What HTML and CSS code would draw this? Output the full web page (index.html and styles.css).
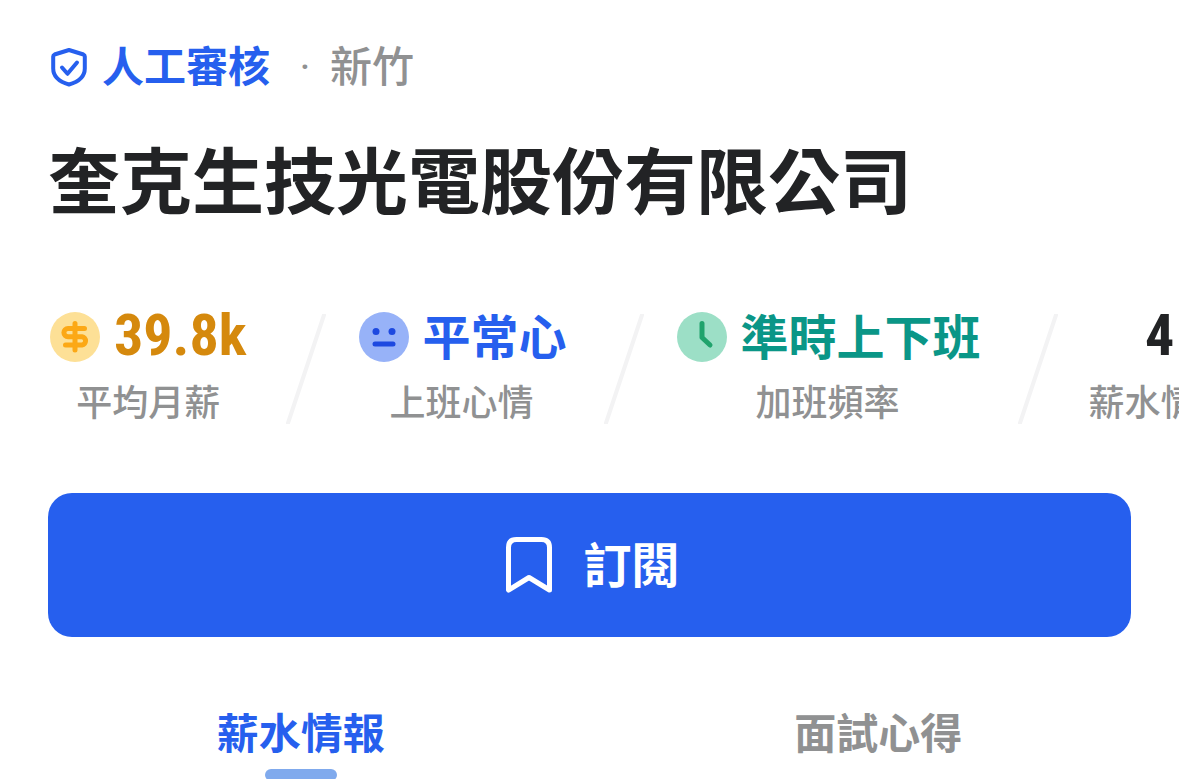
FILE: index.html
```html
<!DOCTYPE html>
<html lang="zh-Hant">
<head>
  <meta charset="UTF-8" />
  <meta name="viewport" content="width=device-width, initial-scale=1.0"/>
  <title>奎克生技光電股份有限公司</title>
  <link rel="stylesheet" href="styles.css">
</head>
<body>
  <header class="company">
    <div class="meta">
      <svg class="shield" viewBox="0 0 42 42" aria-hidden="true">
        <path d="M21 4 L35.500 8.500 Q36.800 9 36.800 10.500 V22.500 C36.800 32 28 36.500 21 38.500 C14 36.500 5.200 32 5.200 22.500 V10.500 Q5.200 9 6.500 8.500 Z"/>
        <path d="M14 21.500 L19.500 27.800 L29 16.500"/>
      </svg>
      <span class="verified">人工審核</span>
      <span class="dot">·</span>
      <span class="city">新竹</span>
    </div>
    <h1>奎克生技光電股份有限公司</h1>
  </header>

  <!-- Company stats, scrolls sideways -->
  <section class="stats">
    <div class="stat salary">
      <div class="value">
        <svg viewBox="0 0 54 54" aria-hidden="true">
          <circle class="disc" cx="27" cy="27" r="25"/>
          <path d="M36.500 18.500 H20 A4.100 4.100 0 0 0 20 26.700 H34 A4.200 4.200 0 0 1 34 35 H17.500 M27 13.500 V40"/>
        </svg>
        <span class="number">39.8k</span>
      </div>
      <div class="label">平均月薪</div>
    </div>
    <svg class="divider" viewBox="0 0 40 110" aria-hidden="true"><path d="M38 1 L2 109"/></svg>
    <div class="stat mood">
      <div class="value">
        <svg viewBox="0 0 54 54" aria-hidden="true">
          <circle class="disc" cx="27" cy="27" r="25"/>
          <circle class="eye" cx="19" cy="21.500" r="3.500"/>
          <circle class="eye" cx="35" cy="21.500" r="3.500"/>
          <path d="M18 34 H36"/>
        </svg>
        <span>平常心</span>
      </div>
      <div class="label">上班心情</div>
    </div>
    <svg class="divider" viewBox="0 0 40 110" aria-hidden="true"><path d="M38 1 L2 109"/></svg>
    <div class="stat overtime">
      <div class="value">
        <svg viewBox="0 0 54 54" aria-hidden="true">
          <circle class="disc" cx="27" cy="27" r="25"/>
          <path d="M27 13.500 V27.500 L35 35"/>
        </svg>
        <span>準時上下班</span>
      </div>
      <div class="label">加班頻率</div>
    </div>
    <svg class="divider" viewBox="0 0 40 110" aria-hidden="true"><path d="M38 1 L2 109"/></svg>
    <div class="stat">
      <div class="value"><span class="number">4</span></div>
      <div class="label">薪水情報</div>
    </div>
  </section>

  <div class="action">
    <button type="button" class="subscribe">
      <svg viewBox="0 0 72 72" aria-hidden="true">
        <path d="M15.500 61 V18.500 Q15.500 10.500 23.500 10.500 H48.500 Q56.500 10.500 56.500 18.500 V61 L36 48.500 Z"/>
      </svg>
      <span>訂閱</span>
    </button>
  </div>

  <nav class="tabs">
    <a href="#salary" class="tab active">薪水情報</a>
    <a href="#interview" class="tab">面試心得</a>
  </nav>
</body>
</html>
```
FILE: styles.css
```css
* {
  box-sizing: border-box;
  margin: 0;
  padding: 0;
}

body {
  font-family: "Noto Sans CJK TC", sans-serif;
  background-color: #fff;
  color: #222325;
  overflow-x: hidden;
}

svg {
  display: block;
  flex-shrink: 0;
  fill: none;
  stroke-linecap: round;
  stroke-linejoin: round;
}

.company {
  padding: 34px 48px 0;
}

.meta {
  display: flex;
  align-items: center;
  font-size: 42px;
  line-height: 60px;
  font-weight: 500;
  color: #909192;
}

.shield {
  width: 42px;
  height: 42px;
  margin-top: 6px;
  stroke: #265fee;
  stroke-width: 4;
}

.verified {
  margin-left: 12px;
  color: #265fee;
  font-weight: bold;
}

.dot {
  width: 60px;
  padding: 8px 0 0 10px;
  line-height: 52px;
  text-align: center;
  font-family: Roboto, sans-serif;
  font-weight: normal;
}

h1 {
  margin-top: 35px;
  font-size: 72px;
  line-height: 96px;
  font-weight: bold;
}

.stats {
  display: flex;
  padding: 79px 48px 8px;
  overflow-x: auto;
  scrollbar-width: none;
}

.stat {
  flex-shrink: 0;
  text-align: center;
}

.value {
  display: flex;
  align-items: center;
  justify-content: center;
  gap: 12px;
  height: 66px;
  font-size: 48px;
  line-height: 60px;
  font-weight: bold;
}

.value svg {
  width: 54px;
  height: 54px;
  stroke-width: 5;
}

.value span {
  padding-bottom: 6px;
}

.value .number {
  padding: 0 2px 4px 0;
  font-family: "Roboto Condensed", "Liberation Sans Narrow", Roboto, sans-serif;
  font-size: 58px;
}

.label {
  margin-top: 6px;
  font-size: 36px;
  line-height: 48px;
  font-weight: 500;
  color: #909192;
}

.salary .value { color: #d5890d; }
.salary .disc { fill: #fde096; }
.salary path { stroke: #fca815; }

.mood .value { color: #265fee; }
.mood .disc { fill: #97b2f8; }
.mood .eye { fill: #1d49e0; }
.mood path { stroke: #1d49e0; }

.overtime .value { color: #0a9687; }
.overtime .disc { fill: #9cdfc6; }
.overtime path { stroke: #20a36c; }

.divider {
  width: 40px;
  height: 110px;
  margin: 10px 31px 0 37px;
  stroke: #f3f3f4;
  stroke-width: 4;
}

.action {
  padding: 61px 48px 0;
}

.subscribe {
  display: flex;
  align-items: center;
  justify-content: center;
  gap: 18px;
  width: 100%;
  height: 144px;
  padding-right: 6px;
  border: none;
  border-radius: 24px;
  background-color: #265fee;
  color: #fff;
  font-family: inherit;
  font-size: 48px;
  line-height: 60px;
  font-weight: bold;
  cursor: pointer;
}

.subscribe span {
  padding-bottom: 6px;
}

.subscribe svg {
  width: 72px;
  height: 72px;
  stroke: #fff;
  stroke-width: 5;
}

.tabs {
  display: flex;
  padding: 64px 12px 0;
}

.tab {
  display: flex;
  flex: 1;
  flex-direction: column;
  align-items: center;
  gap: 8px;
  font-size: 42px;
  line-height: 60px;
  font-weight: bold;
  color: #909192;
  text-decoration: none;
}

.tab.active {
  color: #265fee;
}

.tab.active::after {
  content: "";
  width: 72px;
  height: 12px;
  border-radius: 6px;
  background-color: #80aaed;
}
```
